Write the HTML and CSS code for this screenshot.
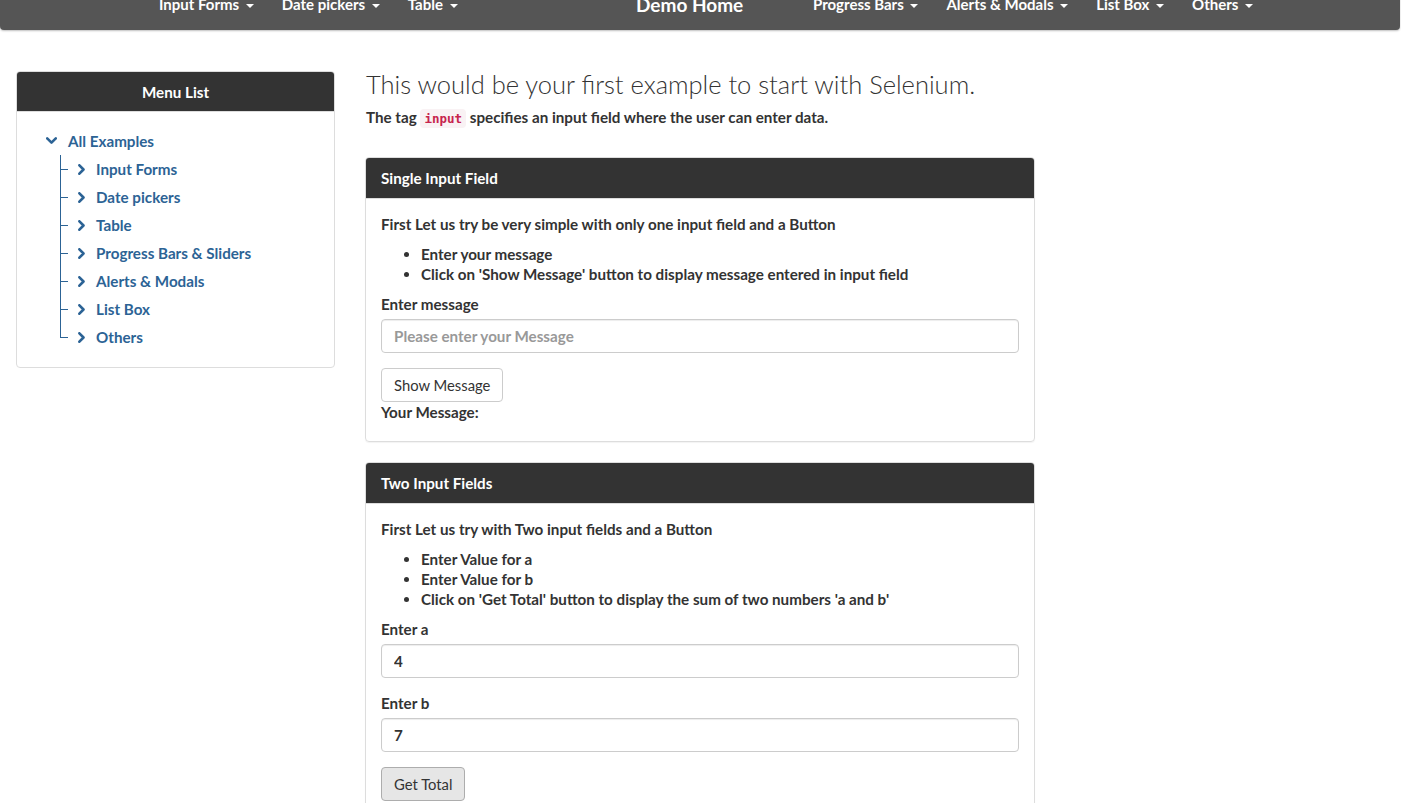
FILE: index.html
```html
<!DOCTYPE html>
<html>
<head>
<meta charset="utf-8">
<link rel="stylesheet" href="styles.css">
</head>
<body>
<nav class="navbar">
  <ul class="nav-group nav-left">
    <li>Input Forms <span class="caret"></span></li>
    <li>Date pickers <span class="caret"></span></li>
    <li>Table <span class="caret"></span></li>
  </ul>
  <div class="brand">Demo Home</div>
  <ul class="nav-group nav-right">
    <li>Progress Bars <span class="caret"></span></li>
    <li>Alerts &amp; Modals <span class="caret"></span></li>
    <li>List Box <span class="caret"></span></li>
    <li>Others <span class="caret"></span></li>
  </ul>
</nav>

<div class="layout">
  <aside class="sidebar">
    <div class="sidebar-head">Menu List</div>
    <div class="sidebar-body">
      <div class="tree-root">
        <svg class="chev-down" width="11" height="8" viewBox="0 0 11 8"><path d="M1.2 1.4 L5.5 5.7 L9.8 1.4" fill="none" stroke="#2c6395" stroke-width="2.6" stroke-linecap="round" stroke-linejoin="round"/></svg>
        <span>All Examples</span>
      </div>
      <ul class="tree-children">
        <li><svg class="chev-right" width="7" height="11" viewBox="0 0 7 11"><path d="M1.4 1.3 L5.5 5.5 L1.4 9.7" fill="none" stroke="#2c6395" stroke-width="2.6" stroke-linecap="round" stroke-linejoin="round"/></svg><span>Input Forms</span></li>
        <li><svg class="chev-right" width="7" height="11" viewBox="0 0 7 11"><path d="M1.4 1.3 L5.5 5.5 L1.4 9.7" fill="none" stroke="#2c6395" stroke-width="2.6" stroke-linecap="round" stroke-linejoin="round"/></svg><span>Date pickers</span></li>
        <li><svg class="chev-right" width="7" height="11" viewBox="0 0 7 11"><path d="M1.4 1.3 L5.5 5.5 L1.4 9.7" fill="none" stroke="#2c6395" stroke-width="2.6" stroke-linecap="round" stroke-linejoin="round"/></svg><span>Table</span></li>
        <li><svg class="chev-right" width="7" height="11" viewBox="0 0 7 11"><path d="M1.4 1.3 L5.5 5.5 L1.4 9.7" fill="none" stroke="#2c6395" stroke-width="2.6" stroke-linecap="round" stroke-linejoin="round"/></svg><span>Progress Bars &amp; Sliders</span></li>
        <li><svg class="chev-right" width="7" height="11" viewBox="0 0 7 11"><path d="M1.4 1.3 L5.5 5.5 L1.4 9.7" fill="none" stroke="#2c6395" stroke-width="2.6" stroke-linecap="round" stroke-linejoin="round"/></svg><span>Alerts &amp; Modals</span></li>
        <li><svg class="chev-right" width="7" height="11" viewBox="0 0 7 11"><path d="M1.4 1.3 L5.5 5.5 L1.4 9.7" fill="none" stroke="#2c6395" stroke-width="2.6" stroke-linecap="round" stroke-linejoin="round"/></svg><span>List Box</span></li>
        <li><svg class="chev-right" width="7" height="11" viewBox="0 0 7 11"><path d="M1.4 1.3 L5.5 5.5 L1.4 9.7" fill="none" stroke="#2c6395" stroke-width="2.6" stroke-linecap="round" stroke-linejoin="round"/></svg><span>Others</span></li>
      </ul>
    </div>
  </aside>

  <main class="main">
    <h3 class="title">This would be your first example to start with Selenium.</h3>
    <p class="intro">The tag <code>input</code> specifies an input field where the user can enter data.</p>

    <section class="panel">
      <div class="panel-head">Single Input Field</div>
      <div class="panel-body">
        <p class="desc">First Let us try be very simple with only one input field and a Button</p>
        <ul class="bullets">
          <li>Enter your message</li>
          <li>Click on 'Show Message' button to display message entered in input field</li>
        </ul>
        <div class="form-group">
          <label class="label">Enter message</label>
          <input class="field" type="text" placeholder="Please enter your Message">
        </div>
        <button class="btn">Show Message</button>
        <div class="result">Your Message:</div>
      </div>
    </section>

    <section class="panel">
      <div class="panel-head">Two Input Fields</div>
      <div class="panel-body">
        <p class="desc">First Let us try with Two input fields and a Button</p>
        <ul class="bullets">
          <li>Enter Value for a</li>
          <li>Enter Value for b</li>
          <li>Click on 'Get Total' button to display the sum of two numbers 'a and b'</li>
        </ul>
        <div class="form-group">
          <label class="label">Enter a</label>
          <input class="field" type="text" value="4">
        </div>
        <div class="form-group">
          <label class="label">Enter b</label>
          <input class="field" type="text" value="7">
        </div>
        <button class="btn btn-active">Get Total</button>
      </div>
    </section>
  </main>
</div>
</body>
</html>
```

FILE: styles.css
```css
* { box-sizing: border-box; }

html, body {
  margin: 0;
  padding: 0;
  background: #fff;
  overflow: hidden;
}

body {
  font-family: Lato, "Liberation Sans", sans-serif;
  font-size: 15.2px;
  font-weight: 700;
  line-height: 20px;
  color: #333;
}

/* ---------- navbar ---------- */
.navbar {
  display: flex;
  align-items: center;
  width: 1400px;
  height: 50px;
  margin-top: -20px;
  padding-left: 145px;
  background: #555;
  border-radius: 0 0 4px 4px;
  box-shadow: 0 1px 2px rgba(0, 0, 0, 0.25);
  color: #fff;
}

.nav-group {
  display: flex;
  list-style: none;
  margin: 0;
  padding: 0;
}

.nav-left { width: 476px; }

.nav-group li {
  padding: 0 14px;
  white-space: nowrap;
  font-size: 15px;
  line-height: 18px;
  padding-bottom: 2px;
}

.caret {
  display: inline-block;
  width: 0;
  height: 0;
  margin-left: 3px;
  vertical-align: middle;
  border-top: 4px solid #fff;
  border-left: 4px solid transparent;
  border-right: 4px solid transparent;
}

.brand {
  width: 177px;
  padding-left: 15px;
  font-size: 19px;
  white-space: nowrap;
}

.nav-right li:first-child { padding-left: 15px; }

/* ---------- layout ---------- */
.layout {
  display: flex;
  align-items: flex-start;
  gap: 30px;
  padding: 41px 0 0 16px;
}

/* ---------- sidebar ---------- */
.sidebar {
  width: 319px;
  flex: none;
  border: 1px solid #ddd;
  border-radius: 4px;
  overflow: hidden;
}

.sidebar-head {
  height: 40px;
  line-height: 40px;
  background: #333;
  color: #fff;
  text-align: center;
  border-bottom: 1px solid #ddd;
}

.sidebar-body {
  padding: 15px 0 16px 29px;
  color: #2c6395;
}

.tree-root {
  display: flex;
  align-items: center;
  height: 28px;
  gap: 11px;
}

.tree-children {
  list-style: none;
  margin: 0 0 0 14px;
  padding: 0;
}

.tree-children li {
  position: relative;
  display: flex;
  align-items: center;
  height: 28px;
  padding-left: 18px;
  gap: 11px;
}

.tree-children li::before {
  content: "";
  position: absolute;
  left: 0;
  top: 0;
  bottom: 0;
  border-left: 1px solid #2c6395;
}

.tree-children li:last-child::before {
  bottom: 50%;
}

.tree-children li::after {
  content: "";
  position: absolute;
  left: 0;
  top: 50%;
  width: 8px;
  border-top: 1px solid #2c6395;
}

/* ---------- main ---------- */
.main {
  width: 670px;
  flex: none;
}

.title {
  margin: 0 0 0 1px;
  font-size: 25.5px;
  font-weight: 300;
  line-height: 26px;
  color: #333;
}

.intro {
  margin: 10px 0 28px 1px;
}

code {
  font-family: "DejaVu Sans Mono", "Liberation Mono", monospace;
  font-size: 12.5px;
  font-weight: 700;
  padding: 2px 4px;
  color: #c7254e;
  background: #f9f2f4;
  border-radius: 4px;
}

.panel {
  border: 1px solid #ddd;
  border-radius: 4px;
  margin-bottom: 20px;
  box-shadow: 0 1px 1px rgba(0, 0, 0, 0.05);
  overflow: hidden;
}

.panel-head {
  height: 41px;
  line-height: 40px;
  padding: 0 15px;
  background: #333;
  color: #fff;
  border-bottom: 1px solid #ddd;
}

.panel-body {
  padding: 15px 15px 19px;
}

.desc {
  margin: 0 0 10px;
}

.bullets {
  margin: 0 0 10px;
  padding-left: 40px;
}

.form-group {
  margin-bottom: 15px;
}

.label {
  display: block;
  margin-bottom: 5px;
}

.field {
  display: block;
  width: 100%;
  height: 34px;
  padding: 6px 12px;
  font-family: inherit;
  font-size: 15.2px;
  font-weight: 700;
  color: #333;
  border: 1px solid #ccc;
  border-radius: 4px;
  box-shadow: inset 0 1px 1px rgba(0, 0, 0, 0.075);
}

.field::placeholder {
  color: #999;
}

.btn {
  display: block;
  height: 34px;
  padding: 6px 12px;
  font-family: inherit;
  font-size: 14.8px;
  font-weight: 400;
  line-height: 20px;
  color: #333;
  background: #fff;
  border: 1px solid #ccc;
  border-radius: 4px;
}

.btn-active {
  background: #e6e6e6;
  border-color: #adadad;
}
```
